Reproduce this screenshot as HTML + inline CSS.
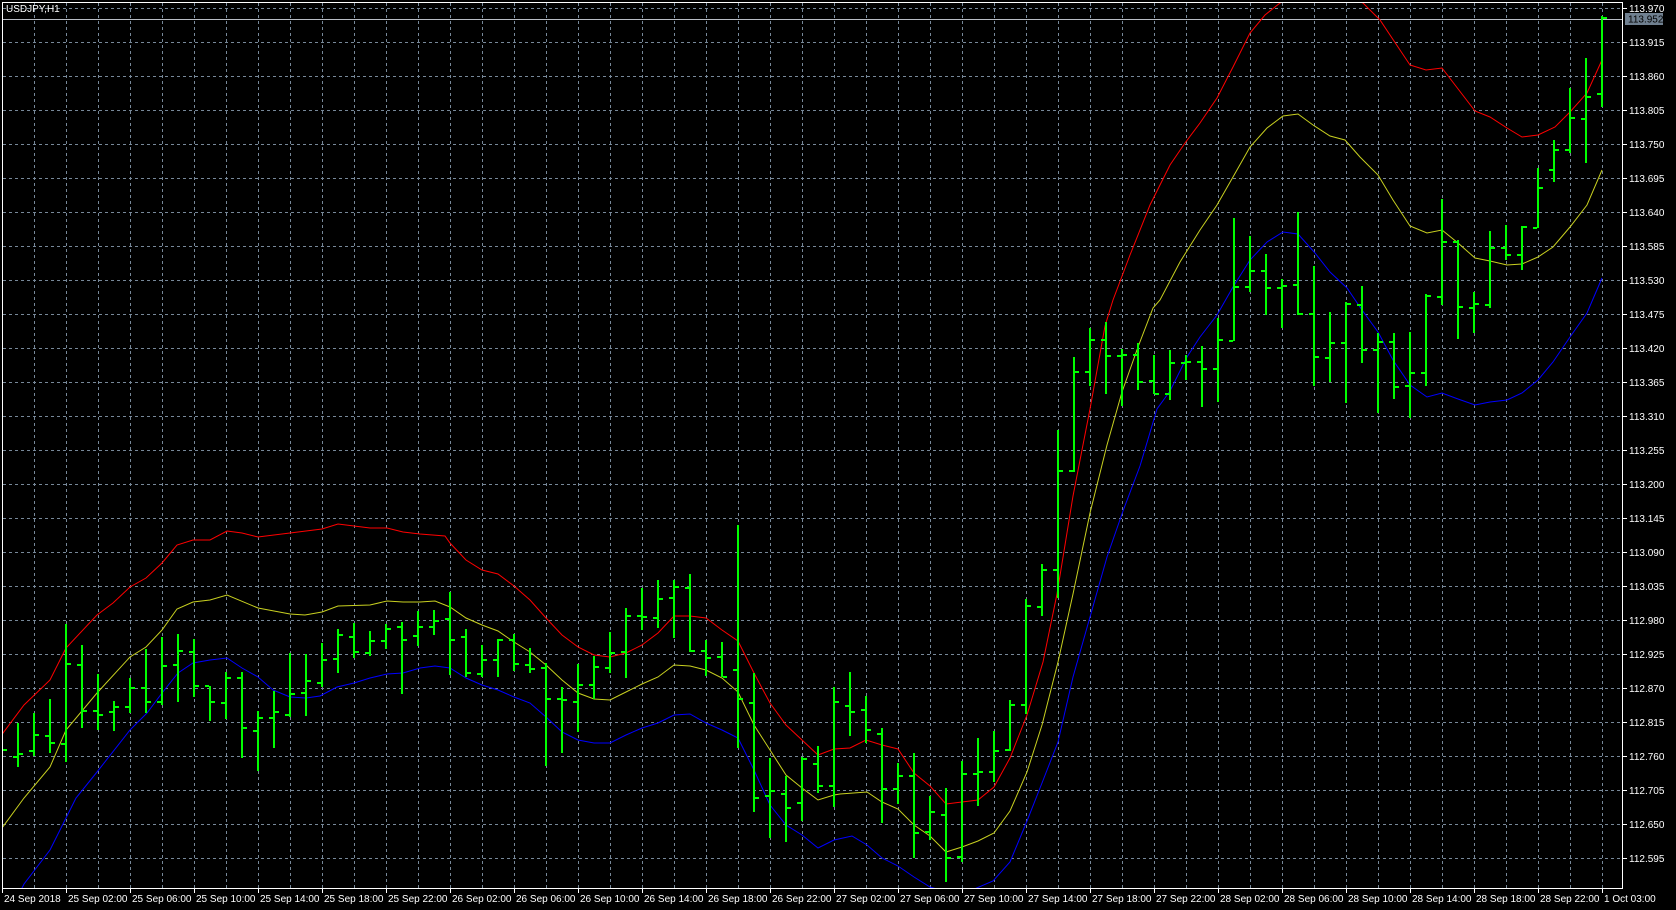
<!DOCTYPE html>
<html><head><meta charset="utf-8">
<style>
html,body{margin:0;padding:0;background:#000;width:1676px;height:910px;overflow:hidden}
svg{display:block}
text{font-family:"Liberation Sans",sans-serif;font-size:10px;fill:#fff}
</style></head><body>
<svg id="s" width="1676" height="910" xmlns="http://www.w3.org/2000/svg">
<defs><clipPath id="c"><rect x="3" y="3" width="1619" height="885"/></clipPath></defs>
<g id="grid" stroke="#778899" stroke-width="1" stroke-dasharray="3,3" shape-rendering="crispEdges"></g>
<line x1="2" y1="19.5" x2="1623" y2="19.5" stroke="#b8bcc4" stroke-width="1"/>
<g clip-path="url(#c)" fill="none" stroke-width="1">
<polyline stroke="#ff0000" points="0,737 24,705 50,680 66,648 97,615 113,603 130,587 146,578 162,563 177,545 193,540 210,540 227,531 242,533 258,537 290,533 322,529 338,524 354,526 370,528 387,528 403,532 420,534 445,536 450,543 466,560 482,570 498,574 514,586 530,600 546,618 562,635 578,647 594,655 610,657 626,653 642,645 658,633 674,616 690,616 706,618 722,630 738,641 754,673 770,703 786,725 802,740 818,755 834,749 850,748 866,740 882,745 898,749 914,773 930,786 946,804 962,802 978,800 994,787 1010,758 1027,715 1043,662 1057,594 1073,496 1090,409 1105,326 1113,300 1130,255 1150,205 1170,165 1185,143 1200,123 1217,98 1233,67 1250,33 1265,15 1280,3 1300,-5 1340,-5 1363,3 1380,20 1410,65 1426,70 1442,68 1475,111 1490,117 1507,128 1522,137 1538,135 1555,127 1570,112 1587,93 1602,60"/>
<polyline stroke="#c8d020" points="2,828 24,798 50,767 66,730 97,693 130,657 146,647 162,630 177,609 193,602 210,600 227,595 258,608 290,614 305,615 322,612 338,606 370,605 387,601 403,602 420,602 435,601 450,607 466,618 482,625 498,631 514,642 530,652 546,665 562,680 578,693 594,699 610,700 626,692 642,684 658,677 674,665 690,666 706,670 722,678 738,692 754,725 770,750 786,775 802,788 818,800 834,795 840,794 867,792 882,802 898,809 914,825 930,836 946,852 962,847 978,841 994,833 1010,811 1027,772 1042,725 1058,662 1073,594 1090,513 1107,445 1122,392 1138,347 1153,308 1160,300 1180,262 1200,230 1217,205 1233,177 1250,147 1267,128 1283,116 1298,114 1313,125 1330,136 1345,140 1360,157 1378,175 1393,200 1410,226 1427,233 1442,230 1458,243 1475,258 1490,261 1507,265 1522,264 1538,257 1553,247 1570,227 1587,205 1602,170"/>
<polyline stroke="#0000ff" points="20,892 24,884 50,850 76,798 97,772 130,730 147,713 162,693 178,673 193,663 210,660 227,658 242,668 258,677 273,690 290,697 306,698 320,696 337,687 354,683 370,678 387,674 403,673 420,668 435,666 450,668 466,678 482,685 498,690 514,697 530,703 546,717 562,732 578,740 594,743 610,743 626,735 642,728 658,723 674,715 690,714 706,723 722,730 738,738 754,770 770,805 786,825 802,835 818,848 834,840 852,836 867,845 882,858 898,866 914,877 930,887 950,893 972,890 993,881 1010,862 1027,821 1042,783 1058,742 1073,677 1090,617 1107,557 1123,511 1140,466 1157,409 1170,391 1187,357 1200,337 1217,315 1233,287 1250,260 1267,242 1283,232 1298,234 1315,253 1330,272 1347,288 1362,310 1378,332 1393,360 1410,385 1427,397 1442,393 1458,399 1475,405 1490,402 1507,400 1522,393 1538,380 1553,362 1570,337 1587,313 1602,278"/>
</g>
<g id="bars" fill="#00ff00" clip-path="url(#c)" shape-rendering="crispEdges"></g>
<rect x="2.5" y="2.5" width="1620" height="886" fill="none" stroke="#fff" stroke-width="1" shape-rendering="crispEdges"/>
<text x="6" y="12">USDJPY,H1</text>
<g id="py"></g>
<g id="tx"></g>
<rect x="1625" y="13" width="38" height="12" fill="#708090"/>
<text x="1628" y="22.5" style="fill:#000">113.952</text>
<g>
<text x="4" y="902">24 Sep 2018</text>
<text x="68" y="902">25 Sep 02:00</text>
<text x="132" y="902">25 Sep 06:00</text>
<text x="196" y="902">25 Sep 10:00</text>
<text x="260" y="902">25 Sep 14:00</text>
<text x="324" y="902">25 Sep 18:00</text>
<text x="388" y="902">25 Sep 22:00</text>
<text x="452" y="902">26 Sep 02:00</text>
<text x="516" y="902">26 Sep 06:00</text>
<text x="580" y="902">26 Sep 10:00</text>
<text x="644" y="902">26 Sep 14:00</text>
<text x="708" y="902">26 Sep 18:00</text>
<text x="772" y="902">26 Sep 22:00</text>
<text x="836" y="902">27 Sep 02:00</text>
<text x="900" y="902">27 Sep 06:00</text>
<text x="964" y="902">27 Sep 10:00</text>
<text x="1028" y="902">27 Sep 14:00</text>
<text x="1092" y="902">27 Sep 18:00</text>
<text x="1156" y="902">27 Sep 22:00</text>
<text x="1220" y="902">28 Sep 02:00</text>
<text x="1284" y="902">28 Sep 06:00</text>
<text x="1348" y="902">28 Sep 10:00</text>
<text x="1412" y="902">28 Sep 14:00</text>
<text x="1476" y="902">28 Sep 18:00</text>
<text x="1540" y="902">28 Sep 22:00</text>
<text x="1604" y="902">1 Oct 03:00</text>
</g>
<g>
<text x="1629" y="12">113.970</text><text x="1629" y="46">113.915</text><text x="1629" y="80">113.860</text><text x="1629" y="114">113.805</text><text x="1629" y="148">113.750</text><text x="1629" y="182">113.695</text><text x="1629" y="216">113.640</text><text x="1629" y="250">113.585</text><text x="1629" y="284">113.530</text><text x="1629" y="318">113.475</text><text x="1629" y="352">113.420</text><text x="1629" y="386">113.365</text><text x="1629" y="420">113.310</text><text x="1629" y="454">113.255</text><text x="1629" y="488">113.200</text><text x="1629" y="522">113.145</text><text x="1629" y="556">113.090</text><text x="1629" y="590">113.035</text><text x="1629" y="624">112.980</text><text x="1629" y="658">112.925</text><text x="1629" y="692">112.870</text><text x="1629" y="726">112.815</text><text x="1629" y="760">112.760</text><text x="1629" y="794">112.705</text><text x="1629" y="828">112.650</text><text x="1629" y="862">112.595</text>
</g>
</svg>
<script>
var NS="http://www.w3.org/2000/svg";
function el(p,t,a){var e=document.createElementNS(NS,t);for(var k in a)e.setAttribute(k,a[k]);p.appendChild(e);return e;}
var g=document.getElementById("grid");
for(var x=34;x<=1602;x+=32)el(g,"line",{x1:x+.5,y1:3,x2:x+.5,y2:888});
for(var i=0;i<26;i++){var y=8+i*34;el(g,"line",{x1:3,y1:y+.5,x2:1622,y2:y+.5});}
var tk=document.getElementById("tx");
for(var k=0;k<26;k++){el(tk,"rect",{x:2+64*k,y:889,width:1,height:4,fill:"#fff"});}
for(var i=0;i<26;i++){el(tk,"rect",{x:1623,y:8+i*34,width:4,height:1,fill:"#fff"});}
var B=[[2,735,760,745,750],[18,723,767,757,754],[34,713,756,751,735],[50,699,753,736,743],[66,624,762,744,664],[82,645,728,665,711],[98,674,730,711,715],[114,701,731,712,707],[130,678,713,707,688],[146,649,713,688,702],[162,637,705,702,666],[178,634,702,665,651],[194,639,697,652,686],[210,686,721,686,702],[226,672,719,703,678],[242,672,758,678,728],[258,711,771,731,718],[274,691,748,718,712],[290,653,717,715,694],[306,654,716,693,681],[322,643,687,683,660],[338,629,673,659,635],[354,623,658,637,652],[370,631,656,653,641],[386,624,649,641,629],[402,622,694,627,640],[418,611,646,636,627],[434,610,635,627,621],[450,592,675,619,640],[466,629,677,637,673],[482,645,677,674,660],[498,639,677,660,640],[514,634,671,640,664],[530,648,673,665,669],[546,663,766,668,699],[562,687,753,699,700],[578,664,732,702,685],[594,656,699,685,667],[610,632,673,668,653],[626,608,678,652,616],[642,588,630,616,617],[658,580,628,618,599],[674,580,638,598,587],[690,574,652,588,651],[706,640,676,651,658],[722,642,677,657,677],[738,525,748,670,699],[754,673,812,703,798],[770,758,838,796,791],[786,776,842,794,808],[802,757,821,803,759],[818,746,793,764,786],[834,687,807,786,702],[850,672,736,706,712],[866,696,743,710,730],[882,728,823,734,789],[898,763,804,789,776],[914,753,858,776,833],[930,796,840,832,812],[946,788,882,815,858],[962,761,862,857,774],[978,738,806,774,772],[994,731,782,772,751],[1010,700,751,750,705],[1026,599,714,705,606],[1042,564,616,607,570],[1058,430,598,570,471],[1074,357,472,471,372],[1090,328,386,372,340],[1106,322,394,340,356],[1122,349,406,356,355],[1138,343,390,355,382],[1154,355,394,381,394],[1170,350,400,394,363],[1186,355,380,363,362],[1202,346,407,362,369],[1218,318,402,369,340],[1234,218,341,341,287],[1250,236,292,287,271],[1266,254,315,271,288],[1282,279,328,288,286],[1298,212,315,285,314],[1314,266,386,314,357],[1330,312,382,358,343],[1346,302,403,343,304],[1362,286,363,305,350],[1378,333,413,350,342],[1394,333,399,342,387],[1410,332,418,386,373],[1426,294,386,373,296],[1442,199,305,297,242],[1458,240,339,242,307],[1474,292,333,308,304],[1490,231,308,305,248],[1506,225,260,248,255],[1522,226,270,255,227],[1538,168,228,228,188],[1554,140,182,170,150],[1570,88,153,150,118],[1586,58,163,119,97],[1602,16,107,94,18]];
var bg=document.getElementById("bars");
B.forEach(function(b){var x=b[0];
el(bg,"rect",{x:x-1,y:b[1],width:2,height:b[2]-b[1]});
el(bg,"rect",{x:x-5,y:b[3]-1,width:4,height:2});
el(bg,"rect",{x:x+1,y:b[4]-1,width:4,height:2});});
</script>
</body></html>
